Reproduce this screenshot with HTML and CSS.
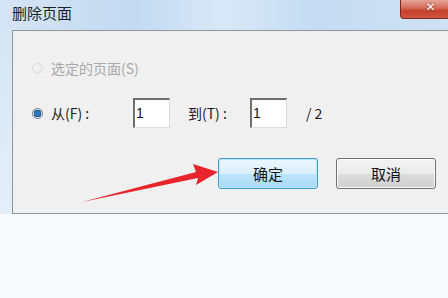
FILE: index.html
```html
<!DOCTYPE html>
<html>
<head>
<meta charset="utf-8">
<link rel="stylesheet" href="styles.css">
</head>
<body>
<div class="window">
  <div class="titlebar">
    <span class="title">删除页面</span>
    <div class="close"><span>✕</span></div>
  </div>
  <div class="frame">
    <div class="panel">
      <div class="row row1">
        <span class="radio disabled"></span>
        <span class="label gray">选定的页面(S)</span>
      </div>
      <div class="row row2">
        <span class="radio checked"></span>
        <span class="label from">从(F) :</span>
        <span class="input">1</span>
        <span class="label to">到(T) :</span>
        <span class="input">1</span>
        <span class="label total">/ 2</span>
      </div>
      <div class="buttons">
        <span class="btn ok">确定</span>
        <span class="btn cancel">取消</span>
      </div>
    </div>
  </div>
  <div class="below"></div>
</div>
<svg class="arrow" width="448" height="298" viewBox="0 0 448 298">
  <path d="M82 202 L198 178 L196 185 L218 172 L193 164 L196 172 Z" fill="#e8242c"/>
</svg>
</body>
</html>
```
FILE: styles.css
```css
html, body {
  margin: 0;
  padding: 0;
  width: 448px;
  height: 298px;
  overflow: hidden;
  background: #f7f8f9;
  font-family: "Noto Sans CJK SC", "Microsoft YaHei", sans-serif;
}
.window {
  width: 448px;
  height: 298px;
  display: flex;
  flex-direction: column;
}
.titlebar {
  height: 30px;
  display: flex;
  align-items: flex-start;
  justify-content: space-between;
  background: linear-gradient(90deg, #d4e4f3 0%, #c3daf1 30%, #d8e8f7 50%, #c5dcf2 70%, #cfe1f3 100%);
  position: relative;
}
.title {
  margin-left: 12px;
  margin-top: 3px;
  font-size: 15px;
  line-height: 20px;
  color: #1a1f28;
}
.close {
  width: 47px;
  height: 18px;
  margin-top: 0;
  background: linear-gradient(180deg, #e8a496 0%, #d46a58 45%, #c3412c 60%, #d0543d 100%);
  border: 1px solid #7a2a22;
  border-top: none;
  border-right: none;
  border-radius: 0 0 0 4px;
  display: flex;
  align-items: center;
  justify-content: center;
}
.close span {
  color: #ffffff;
  font-family: "DejaVu Sans", sans-serif;
  font-weight: bold;
  font-size: 12px;
  line-height: 12px;
  margin-left: 12px;
  margin-top: -4px;
  text-shadow: 0 0 2px #7a2a22;
}
.frame {
  height: 184px;
  padding-left: 12px;
  background: linear-gradient(180deg, #d6e6f5 0%, #e4eef8 100%);
  overflow: hidden;
}
.panel {
  width: 460px;
  height: 182px;
  background: #f0f0f0;
  border: 1px solid #8e959c;
  border-right: none;
  display: flex;
  flex-direction: column;
  box-sizing: content-box;
}
.row {
  display: flex;
  align-items: center;
}
.row1 {
  margin-top: 27px;
  height: 20px;
}
.row2 {
  margin-top: 19px;
  height: 32px;
}
.radio {
  width: 11px;
  height: 11px;
  border-radius: 50%;
  margin-left: 19px;
  box-sizing: border-box;
}
.radio.disabled {
  border: 1px solid #dcdcdc;
  background: radial-gradient(circle at 40% 40%, #f6f6f6, #e6e6e6);
}
.radio.checked {
  border: 1px solid #6c7a8a;
  background: radial-gradient(circle at 50% 50%, #2a79c4 0 2.5px, #0b4b8a 3.5px, #e3e8ee 4px);
}
.label {
  font-size: 14px;
  line-height: 20px;
  color: #1b1b1b;
}
.gray {
  color: #a8a8a8;
  margin-left: 8px;
}
.from {
  margin-left: 8px;
  width: 82px;
}
.input {
  width: 37px;
  height: 30px;
  box-sizing: border-box;
  background: #ffffff;
  border-top: 2px solid #6f6f6f;
  border-left: 2px solid #6f6f6f;
  border-right: 1px solid #dcdcdc;
  border-bottom: 1px solid #dcdcdc;
  font-family: "Liberation Sans", sans-serif;
  font-size: 14px;
  line-height: 20px;
  padding-left: 1px;
  padding-top: 3px;
  color: #111;
}
.to {
  margin-left: 18px;
  width: 62px;
}
.total {
  margin-left: 19px;
}
.buttons {
  display: flex;
  margin-top: 29px;
  margin-left: 205px;
  gap: 18px;
}
.btn {
  width: 100px;
  height: 31px;
  box-sizing: border-box;
  border-radius: 3px;
  display: flex;
  align-items: center;
  justify-content: center;
  font-size: 15px;
  color: #111;
}
.ok {
  border: 1px solid #3c9dd4;
  background: linear-gradient(180deg, #eaf6fd 0%, #d9f0fc 50%, #bee6fd 51%, #a7d9f5 100%);
  box-shadow: inset 0 0 0 1px #bfe6f9;
}
.cancel {
  border: 1px solid #707070;
  background: linear-gradient(180deg, #f2f2f2 0%, #ebebeb 50%, #dddddd 51%, #cfcfcf 100%);
  box-shadow: inset 0 0 0 1px #fbfbfb;
}
.below {
  flex: 1;
  background: #f8f9fa;
}
.arrow {
  position: absolute;
  left: 0;
  top: 0;
}
```
